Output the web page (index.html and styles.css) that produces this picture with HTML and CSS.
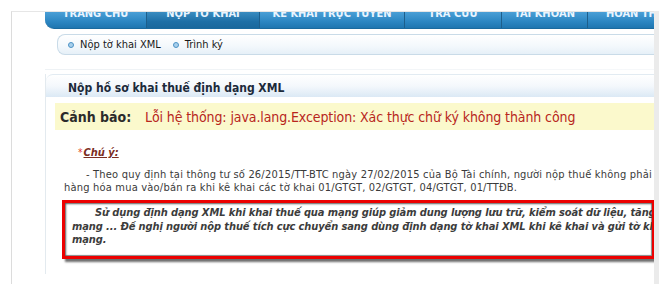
FILE: index.html
```html
<!DOCTYPE html>
<html lang="vi">
<head>
<meta charset="utf-8">
<link rel="stylesheet" href="styles.css">
</head>
<body>
<div class="page">
  <div class="frame">
    <div class="nav">
      <div class="tab t1"><span>TRANG CHỦ</span></div>
      <div class="tab t2 active"><span>NỘP TỜ KHAI</span></div>
      <div class="tab t3"><span>KÊ KHAI TRỰC TUYẾN</span></div>
      <div class="tab t4"><span>TRA CỨU</span></div>
      <div class="tab t5"><span>TÀI KHOẢN</span></div>
      <div class="tab t6"><span>HOÀN THIỆN</span></div>
    </div>
    <div class="subnav">
      <span class="item"><i class="dot"></i>Nộp tờ khai XML</span>
      <span class="item"><i class="dot"></i>Trình ký</span>
    </div>
    <div class="sep"></div>
    <div class="panel">
      <div class="panel-head">Nộp hồ sơ khai thuế định dạng XML</div>
      <div class="warn"><b>Cảnh báo:</b><span class="err">Lỗi hệ thống: java.lang.Exception: Xác thực chữ ký không thành công</span></div>
      <div class="note"><span class="star">*</span><span class="chuy">Chú ý:</span></div>
      <div class="para">
        <div class="l1">- Theo quy định tại thông tư số 26/2015/TT-BTC ngày 27/02/2015 của Bộ Tài chính, người nộp thuế không phải nộp bảng kê</div>
        <div>hàng hóa mua vào/bán ra khi kê khai các tờ khai 01/GTGT, 02/GTGT, 04/GTGT, 01/TTĐB.</div>
      </div>
      <div class="redbox">
        <div class="inner">
          <div class="l1">Sử dụng định dạng XML khi khai thuế qua mạng giúp giảm dung lượng lưu trữ, kiểm soát dữ liệu, tăng tốc độ</div>
          <div>mạng ... Đề nghị người nộp thuế tích cực chuyển sang dùng định dạng tờ khai XML khi kê khai và gửi tờ khai qua</div>
          <div>mạng.</div>
        </div>
      </div>
    </div>
  </div>
  <div class="scroll"></div>
</div>
</body>
</html>
```
FILE: styles.css
```css
html, body { margin: 0; padding: 0; background: #fff; }
body {
  font-family: "DejaVu Sans Condensed", "DejaVu Sans", sans-serif;
  color: #333;
  overflow: hidden;
  width: 664px;
  height: 284px;
}
.page {
  display: flex;
  padding-top: 11px;
  height: 273px;
}
.frame {
  margin-left: 11px;
  width: 643px;
  border-left: 1px solid #dcdcdc;
  border-top: 1px solid #e6e6e6;
  overflow: hidden;
  padding-left: 33px;
  box-sizing: border-box;
  background: #fff;
}
.scroll {
  width: 5px;
  background: #ebebeb;
}
.nav {
  display: flex;
  height: 16px;
  background: linear-gradient(#4a9fd6, #2c86c2 60%, #1f76b0);
  border-bottom-left-radius: 9px;
  border-bottom: 1px solid #1b6a9f;
  overflow: hidden;
  white-space: nowrap;
}
.tab {
  height: 16px;
  border-right: 1px solid #1d5f8c;
  color: #e8f4ff;
  font-weight: bold;
  font-size: 11px;
  text-align: center;
  overflow: hidden;
  flex: none;
}
.tab span { display: block; margin-top: -8px; line-height: 20px; }
.t1 { width: 101px; }
.t2 { width: 112px; }
.t3 { width: 144px; }
.t4 { width: 96px; }
.t5 { width: 85px; }
.t6 { width: 80px; border-right: 0; text-align: left; padding-left: 18px; }
.active { background: linear-gradient(#3a8cc0, #1e6fa6 60%, #1a689c); }
.subnav {
  margin-top: 5px;
  margin-left: 12px;
  height: 19px;
  border: 1px solid #c9dbe8;
  border-right: 0;
  border-radius: 8px 0 0 8px;
  background: linear-gradient(#ffffff, #f3f8fc 60%, #e6f0f8);
  display: flex;
  align-items: center;
  gap: 12px;
  padding-left: 10px;
  font-size: 11px;
  color: #1a1a1a;
}
.item { display: flex; align-items: center; gap: 6px; }
.dot {
  width: 4px; height: 4px;
  border-radius: 50%;
  border: 1px solid #4d93c6;
  background: #a8d0ec;
}
.sep {
  margin-top: 14px;
  height: 1px;
  background: linear-gradient(90deg, #eef2f5, #f6f8fa);
}
.panel {
  margin-top: 4px;
  border-left: 1px solid #e3eaef;
  height: 200px;
}
.panel-head {
  height: 22px;
  border-top: 1px solid #e2ebf2;
  border-top-left-radius: 7px;
  background: linear-gradient(#ffffff, #f4f8fc 50%, #dbe9f5);
  padding-left: 22px;
  font-weight: bold;
  font-size: 12px;
  line-height: 26px;
  color: #1c2a3a;
}
.warn {
  margin: 6px 0 0 9px;
  height: 27px;
  background: #fbf9cc;
  display: flex;
  align-items: center;
  padding-left: 5px;
  font-size: 14px;
  white-space: nowrap;
  overflow: hidden;
}
.warn b { color: #2b2b2b; width: 85px; flex: none; }
.err { color: #b8261d; letter-spacing: -0.1px; }
.note {
  margin: 17px 0 0 32px;
  font-size: 11px;
  line-height: 12px;
}
.star { color: #e23a2a; font-size: 10px; vertical-align: top; margin-right: 1px; }
.chuy { color: #7b2d22; font-weight: bold; font-style: italic; text-decoration: underline; }
.para {
  margin: 9px 0 0 18px;
  font-size: 11px;
  line-height: 13px;
  color: #3a3a3a;
  white-space: nowrap;
  letter-spacing: 0.2px;
}
.para .l1 { padding-left: 22px; }
.redbox {
  margin: 6px 0 0 16px;
  width: 593px;
  height: 59px;
  box-sizing: border-box;
  border: 3px solid #ec0000;
  box-shadow: 3px 3px 2px #6e6e6e;
  background: #fff;
  overflow: hidden;
}
.inner {
  height: 100%;
  box-sizing: border-box;
  box-shadow: inset 1px 1px 2px #5a5a5a, inset -1px -1px 1px #8a8a8a;
  padding: 3px 0 0 7px;
  font-size: 11px;
  font-weight: bold;
  font-style: italic;
  line-height: 13.5px;
  color: #3c3c3c;
  white-space: nowrap;
  letter-spacing: -0.1px;
}
.inner .l1 { padding-left: 23px; }
```
